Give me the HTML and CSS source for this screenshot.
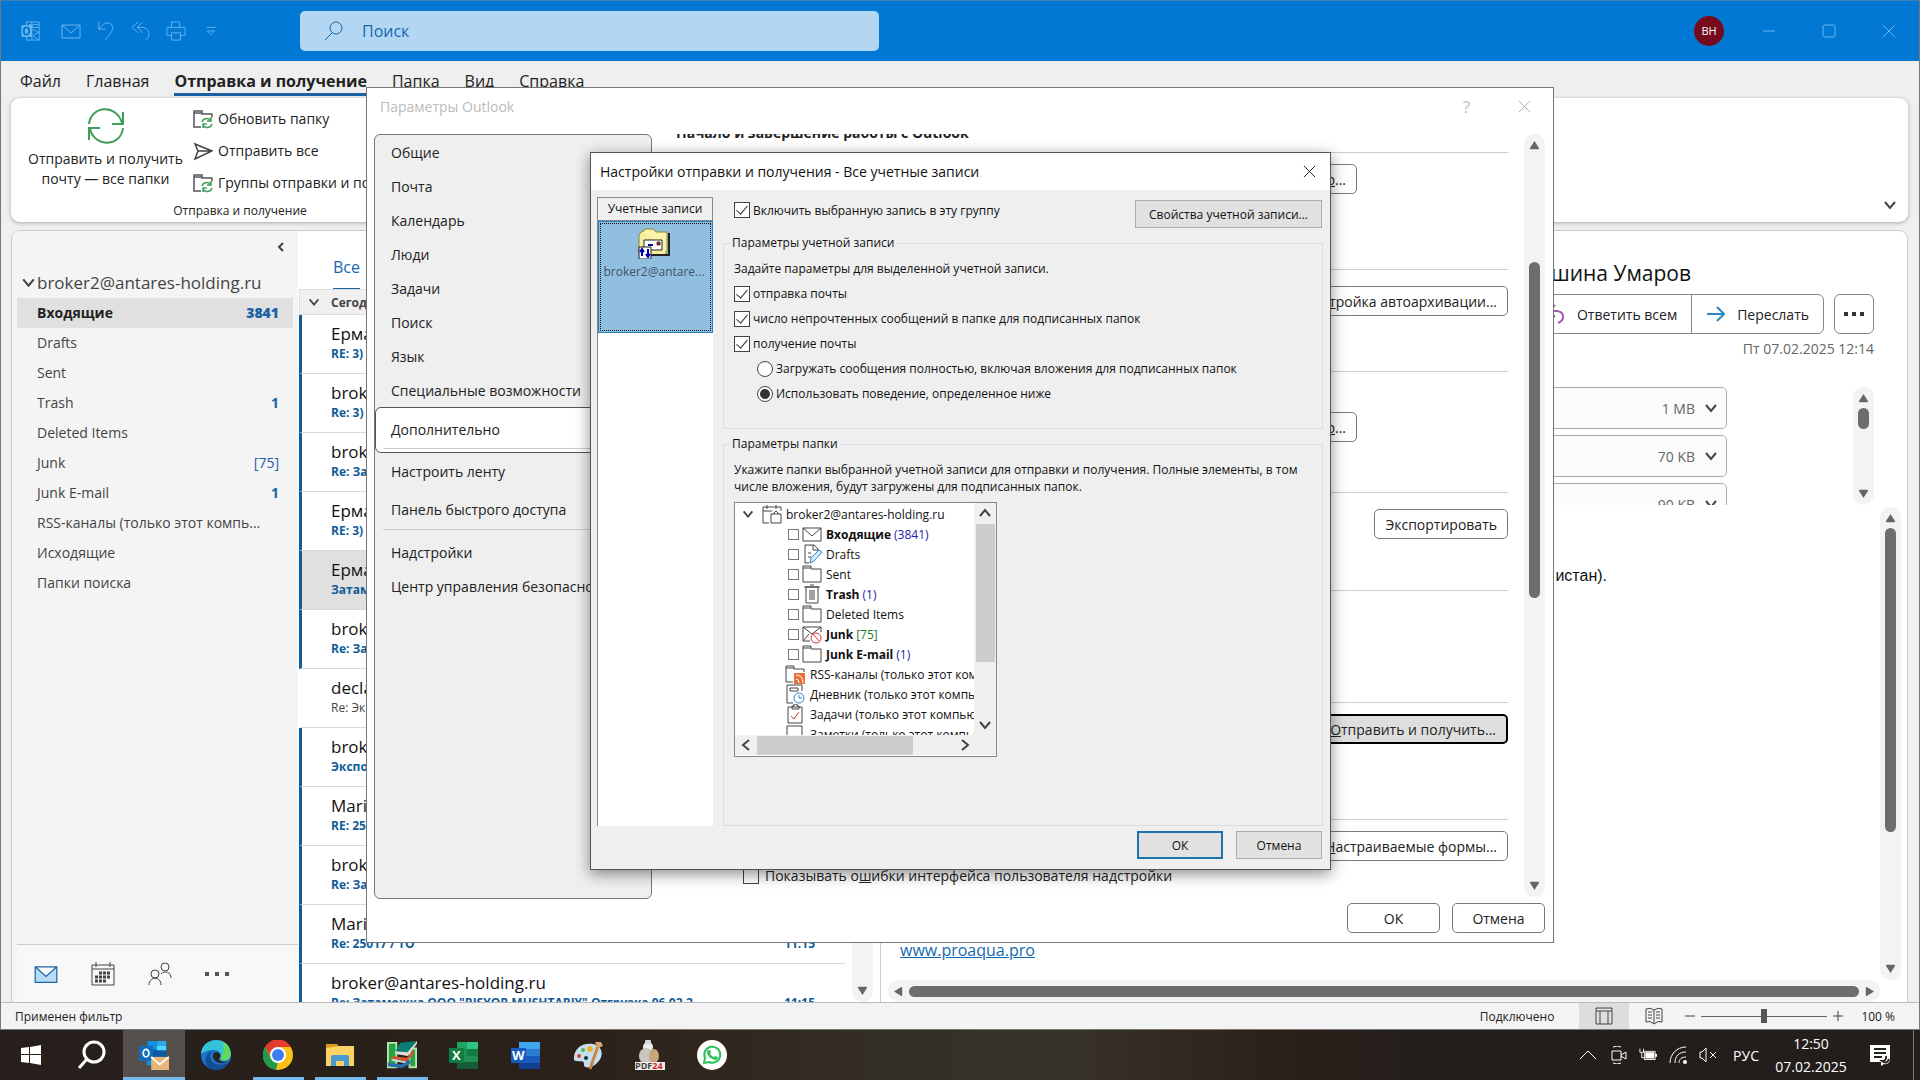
FILE: index.html
```html
<!DOCTYPE html>
<html lang="ru">
<head>
    <meta charset="UTF-8">
    <meta name="viewport" content="width=device-width, initial-scale=1.0">
    <title>Outlook</title>
    <link rel="stylesheet" href="styles.css">
</head>
<body>
    <svg class="sprite" aria-hidden="true">
        <symbol id="i-mail" viewBox="0 0 20 20"><path d="M1 4h18v13H1zM1 4l9 8 9-8"/></symbol>
        <symbol id="i-chev" viewBox="0 0 16 16"><path d="M3 5l5 6 5-6"/></symbol>
        <symbol id="i-close" viewBox="0 0 14 14"><path d="M1 1l12 12M13 1L1 13"/></symbol>
        <symbol id="i-folder" viewBox="0 0 20 20"><path d="M1 18V2h8v3h10v13zM1 4h8"/></symbol>
        <symbol id="i-sync" viewBox="0 0 20 20"><path fill="none" stroke="#555" stroke-width="1.5" d="M8 18H1V2h8v3h10v3M1 4h8"/><path fill="none" stroke="#3f9e58" stroke-width="1.5" d="M9 13c1-4 7-5 9-1M18 8v4h-4M19 15c-1 4-7 5-9 1M10 19v-4h4"/></symbol>
        <symbol id="i-up" viewBox="0 0 12 12"><path fill="#666" d="M6 1l5 8q0 1-1 1H2q-1 0-1-1z"/></symbol>
    </svg>

    <div class="outlook">
        <header class="titlebar">
            <nav class="quick">
                <button aria-label="Outlook"><svg viewBox="0 0 22 22"><path d="M6 5V1h14v20H6v-4M9 4h11M12 1v6h8M20 12l-7 4 7 5M13 9l7 4M12 17v4"/><path fill="#6ab6ee" d="M1 5h11v12H1z"/><ellipse cx="6" cy="11" rx="3" ry="4" fill="#6ab6ee" stroke="#0078d4" stroke-width="2"/></svg></button>
                <button aria-label="Создать"><svg><use href="#i-mail"/></svg></button>
                <button aria-label="Отменить"><svg viewBox="0 0 20 22"><path d="M2 1v8h8M2 9C6 3 12 0 16 4c4 5-1 9-7 17"/></svg></button>
                <button aria-label="Ответить всем"><svg viewBox="0 0 22 22"><path d="M8 1L1 7l7 6M13 1L7 7l6 6M7 7h6c8 1 9 10 3 14"/></svg></button>
                <button aria-label="Печать"><svg viewBox="0 0 22 22"><path d="M6 7V1h9v6M6 16H1V7h20v9h-5M6 13h10v8H6z"/></svg></button>
                <button aria-label="Настройка панели"><svg viewBox="0 0 22 22"><path d="M6 7h10M7 11l4 4 4-4z"/></svg></button>
            </nav>
            <label class="search">
                <svg viewBox="0 0 20 20"><circle cx="12" cy="7" r="6"/><path d="M8 12l-7 7"/></svg>
                <input type="text" placeholder="Поиск" aria-label="Поиск">
            </label>
            <div class="win-ctrl">
                <span class="avatar">ВН</span>
                <button aria-label="Свернуть"><svg viewBox="0 0 14 14"><path d="M1 7h12"/></svg></button>
                <button aria-label="Развернуть"><svg viewBox="0 0 14 14"><rect x="1" y="1" width="12" height="12" rx="2"/></svg></button>
                <button aria-label="Закрыть"><svg><use href="#i-close"/></svg></button>
            </div>
        </header>

        <nav class="tabs">
            <a href="#">Файл</a>
            <a href="#">Главная</a>
            <a href="#" class="active">Отправка и получение</a>
            <a href="#">Папка</a>
            <a href="#">Вид</a>
            <a href="#">Справка</a>
        </nav>

        <section class="ribbon">
            <div class="ribbon-group">
                <div class="ribbon-tools">
                    <button class="big">
                        <svg viewBox="0 0 38 38"><path d="M2 17C4-2 30-3 35 16M36 5v12H25M36 21C34 40 8 41 3 22M2 33V21h11"/></svg>
                        <span>Отправить и получить почту — все папки</span>
                    </button>
                    <div class="small-tools">
                        <button><svg><use href="#i-sync"/></svg>Обновить папку</button>
                        <button><svg viewBox="0 0 20 20"><path stroke-width="1.5" d="M2 3l17 7-17 8 3-8zM5 10h13"/></svg>Отправить все</button>
                        <button><svg><use href="#i-sync"/></svg>Группы отправки и получения</button>
                    </div>
                </div>
                <span class="group-name">Отправка и получение</span>
            </div>
            <button class="collapse" aria-label="Свернуть ленту"><svg><use href="#i-chev"/></svg></button>
        </section>

        <main class="workspace">
            <aside class="folders">
                <button class="fold" aria-label="Свернуть область"><svg viewBox="0 0 8 12"><path d="M6 2L2 6l4 4"/></svg></button>
                <h2><svg><use href="#i-chev"/></svg>broker2@antares-holding.ru</h2>
                <ul>
                    <li class="current"><a href="#">Входящие</a><b>3841</b></li>
                    <li><a href="#">Drafts</a></li>
                    <li><a href="#">Sent</a></li>
                    <li><a href="#">Trash</a><b>1</b></li>
                    <li><a href="#">Deleted Items</a></li>
                    <li><a href="#">Junk</a><i>[75]</i></li>
                    <li><a href="#">Junk E-mail</a><b>1</b></li>
                    <li><a href="#">RSS-каналы (только этот компь...</a></li>
                    <li><a href="#">Исходящие</a></li>
                    <li><a href="#">Папки поиска</a></li>
                </ul>
                <nav class="modules">
                    <button aria-label="Почта" class="mail-on"><svg><use href="#i-mail"/></svg></button>
                    <button aria-label="Календарь"><svg viewBox="0 0 24 24"><path d="M1 3h22v20H1zM1 7h22M5 0v5M19 0v5"/><path stroke-width="3" stroke-dasharray="3 1" d="M8 11h12M4 15h16M4 19h11"/></svg></button>
                    <button aria-label="Люди"><svg viewBox="0 0 24 24"><circle cx="7" cy="12" r="4"/><circle cx="17" cy="5" r="4"/><path d="M1 23c0-9 12-9 12 0M13 12c4-4 10-2 10 4"/></svg></button>
                    <button aria-label="Ещё"><svg viewBox="0 0 24 24"><path stroke="none" fill="#555" d="M0 10h4v4H0zM10 10h4v4h-4zM20 10h4v4h-4z"/></svg></button>
                </nav>
            </aside>

            <section class="messages">
                <div class="filter"><a href="#">Все</a></div>
                <div class="group"><svg><use href="#i-chev"/></svg>Сегодня</div>
                <ul>
                    <li><span>Ерма</span><b>RE: 3)</b></li>
                    <li><span>broker</span><b>Re: 3)</b></li>
                    <li><span>broker</span><b>Re: За</b></li>
                    <li><span>Ерма</span><b>RE: 3)</b></li>
                    <li class="picked"><span>Ерма</span><b>Затам</b></li>
                    <li><span>broker</span><b>Re: За</b></li>
                    <li class="read"><span>decla</span><b>Re: Эк</b></li>
                    <li><span>broker</span><b>Экспо</b></li>
                    <li><span>Mari</span><b>RE: 25</b></li>
                    <li><span>broker</span><b>Re: За</b></li>
                    <li><span>Mari</span><b>Re: 25017 / ТО<time>11:15</time></b></li>
                    <li><span>broker@antares-holding.ru</span><b>Re: Затаможка ООО "RISYOR MUSHTARIY" Отгрузка 06.02.2<time>11:15</time></b></li>
                </ul>
                <div class="vbar list-bar"><svg class="down"><use href="#i-up"/></svg></div>
            </section>

            <article class="reading">
                <h1>шина Умаров</h1>
                <div class="actions">
                    <button><svg class="purple" viewBox="0 0 20 20"><path d="M9 1L3 7l6 6M4 7h7c8 1 8 9 1 12"/></svg>Ответить всем</button>
                    <button><svg class="blue" viewBox="0 0 20 20"><path d="M1 10h17M11 3l7 7-7 7"/></svg>Переслать</button>
                    <button class="more" aria-label="Другие действия"><svg viewBox="0 0 20 20"><path d="M0 8h4v4H0zM8 8h4v4H8zM16 8h4v4h-4z"/></svg></button>
                </div>
                <time class="date">Пт 07.02.2025 12:14</time>
                <div class="attachments">
                    <ul>
                        <li>1 MB<svg><use href="#i-chev"/></svg></li>
                        <li>70 KB<svg><use href="#i-chev"/></svg></li>
                        <li>90 KB<svg><use href="#i-chev"/></svg></li>
                    </ul>
                    <div class="vbar"><svg><use href="#i-up"/></svg><i></i><svg class="down"><use href="#i-up"/></svg></div>
                </div>
                <div class="mail">
                    <div class="mail-body">
                        <p>истан).</p>
                        <a href="#">www.proaqua.pro</a>
                    </div>
                    <div class="vbar"><svg><use href="#i-up"/></svg><i></i><svg class="down"><use href="#i-up"/></svg></div>
                </div>
                <div class="hbar"><svg class="left"><use href="#i-up"/></svg><i></i><svg class="right"><use href="#i-up"/></svg></div>
            </article>
        </main>

        <footer class="status">
            <span>Применен фильтр</span>
            <span class="online">Подключено</span>
            <button class="view on" aria-label="Обычный"><svg viewBox="0 0 18 18"><path d="M1 1h16v16H1zM1 4h16M5 4v13M13 4v13"/></svg></button>
            <button class="view" aria-label="Чтение"><svg viewBox="0 0 18 18"><path d="M9 3Q5 0 1 2v13q4-2 8 2 4-4 8-2V2Q13 0 9 3v14M3 5h4M3 8h4M3 11h4M11 5h4M11 8h4M11 11h4"/></svg></button>
            <button class="step" aria-label="Уменьшить"><svg viewBox="0 0 12 12"><path d="M1 6h10"/></svg></button>
            <input type="range" min="0" max="100" value="50" aria-label="Масштаб">
            <button class="step" aria-label="Увеличить"><svg viewBox="0 0 12 12"><path d="M1 6h10M6 1v10"/></svg></button>
            <span class="zoom">100 %</span>
        </footer>
    </div>

    <footer class="taskbar">
        <nav class="apps">
            <button aria-label="Пуск"><svg viewBox="0 0 30 30"><path fill="#fff" d="M5 8l8-1v7H5zM14 7l11-2v9H14zM5 15h8v8l-8-1zM14 15h11v10l-11-2z"/></svg></button>
            <button aria-label="Поиск"><svg viewBox="0 0 30 30"><circle cx="17" cy="12" r="10" fill="none" stroke="#fff" stroke-width="3"/><path stroke="#fff" stroke-width="3" d="M10 19L2 28"/></svg></button>
            <button class="front" aria-label="Outlook"><svg viewBox="0 0 32 32"><path fill="#0a5aa8" d="M9 1h20v18H9z"/><path fill="#1490df" d="M9 1h10v9H9zM8 22h10v5H8z"/><path fill="#28a8ea" d="M19 1h10v5H19z"/><path fill="#50d9ff" d="M19 6h10v5H19z"/><rect y="6" width="15" height="16" rx="1" fill="#0f6cbd"/><ellipse cx="7.500" cy="14" rx="3" ry="4" fill="none" stroke="#fff" stroke-width="2"/><path fill="#e8b777" d="M13 18h19v14H13z"/><path d="M13 18l9 8 10-8" fill="none" stroke="#fff" stroke-width="2"/></svg></button>
            <button aria-label="Edge"><svg viewBox="0 0 30 30"><circle cx="15" cy="15" r="15" fill="#1b72c8"/><path fill="#35c1d6" d="M0 14C1-4 29-5 30 14c0 7-7 8-11 5 3-4-1-10-7-9-6 0-11 3-12 4z"/><path fill="#64d85c" d="M22 2c8 4 10 15 4 18-3 1-6 0-7-1 3-3 4-8 3-17z"/><path fill="#124c93" d="M9 15c0 9 8 12 18 8-5 8-18 10-22 1-2-7 3-13 7-13-2 1-3 2-3 4z"/><path fill="#28221d" d="M13 13c3-2 7 0 6 3l-1 4c3 3 7 2 10 1-6 4-15 2-16-4 0-2 0-3 1-4z"/></svg></button>
            <button class="open" aria-label="Chrome"><svg viewBox="0 0 30 30"><circle cx="15" cy="15" r="15" fill="#fbc116"/><path fill="#e33b2e" d="M2 7a15 15 0 0 1 26 0H15L9 18z"/><path fill="#229a4a" d="M2 7l7 12 6 3-2 8A15 15 0 0 1 2 7z"/><circle cx="15" cy="15" r="8" fill="#fff"/><circle cx="15" cy="15" r="6" fill="#3b7ded"/></svg></button>
            <button class="open" aria-label="Проводник"><svg viewBox="0 0 30 30"><path fill="#d89b1c" d="M1 4h11l3 4H1z"/><path fill="#fbd364" d="M1 8l13-2h15v20H1z"/><path fill="#4a9ad4" d="M6 26v-9q0-2 2-2h14q2 0 2 2v9h-5v-5h-8v5z"/></svg></button>
            <button class="open" aria-label="Справочник"><svg viewBox="0 0 32 32"><path fill="#25a341" stroke="#b6e6b0" d="M1 3h9v26H1zM24 9h7v20h-7z"/><path fill="#0a7d74" d="M14 3L32 1 22 13 9 12z"/><path fill="#ddd" d="M9 12l13 1L32 1v3L22 17 9 15z"/><path fill="#d4562b" d="M5 17l16 2 8-9v4l-8 9L5 20z"/><path fill="#c9d6dd" d="M5 20l16 3v2L5 22z"/><path fill="#2a6da8" d="M1 24l14 2 10-5v4l-9 5-15-2z"/></svg></button>
            <button aria-label="Excel"><svg viewBox="0 0 30 30"><path fill="#1f8f53" d="M8 2h21v27H8z"/><path fill="#33c481" d="M18 2h11v7H18z"/><path fill="#21a366" d="M8 2h10v7H8z"/><path fill="#185c37" d="M8 22h21v7H8z"/><path fill="#107c41" d="M0 8h15v15H0zM18 9h11v7H18z"/><text x="3" y="20">X</text></svg></button>
            <button aria-label="Word"><svg viewBox="0 0 30 30"><path fill="#2b7cd3" d="M8 2h21v27H8z"/><path fill="#41a5ee" d="M8 2h21v7H8z"/><path fill="#185abd" d="M8 16h21v7H8zM0 8h15v15H0z"/><path fill="#103f91" d="M8 23h21v6H8z"/><text x="1" y="20">W</text></svg></button>
            <button aria-label="Paint"><svg viewBox="0 0 30 30"><path fill="#c5dff0" d="M1 20C0 9 9 2 20 4c10 2 11 12 5 18-6 7-15 7-14 2 0-5-6-1-10-4z"/><circle cx="6" cy="16" r="2" fill="#d2433a"/><circle cx="10" cy="10" r="2" fill="#56b14b"/><circle cx="17" cy="9" r="3" fill="#ecb42e"/><circle cx="13" cy="18" r="2" fill="#22303c"/><path stroke="#c98646" stroke-width="3" d="M17 29L25 6"/><path fill="#d9aa76" d="M22 2l6 0 2 4-5 2z"/></svg></button>
            <button aria-label="PDF24"><svg viewBox="0 0 30 30"><circle cx="13" cy="7" r="5" fill="#eee"/><circle cx="13" cy="2" r="3" fill="#ddd"/><ellipse cx="11" cy="16" rx="7" ry="8" fill="#c9c6c0"/><ellipse cx="19" cy="16" rx="5" ry="7" fill="#c8a67a"/><path fill="#eee" d="M0 22h30v8H0z"/><text class="pdf" x="0" y="29">PDF<tspan>24</tspan></text></svg></button>
            <button aria-label="WhatsApp"><svg viewBox="0 0 30 30"><circle cx="15" cy="15" r="15" fill="#fff"/><path fill="none" stroke="#2fc25c" stroke-width="2" d="M7 23l1-5a8 8 0 1 1 4 4z"/><path fill="#2fc25c" d="M11 10l2 0 1 3-1 1q1 2 4 3l1-1 3 1q0 3-3 3-7-2-8-7 0-2 1-3z"/></svg></button>
        </nav>
        <div class="tray">
            <svg viewBox="0 0 18 18"><path d="M1 13l8-8 8 8"/></svg>
            <svg viewBox="0 0 18 18"><path d="M3 5h9v9H3zM12 9l5-3v7l-5-3M4 1q4-2 8 0M4 17q4 2 8 0"/></svg>
            <svg viewBox="0 0 20 18"><path d="M1 2v4h4V2M3 6v6h3M6 5h12v9H6z"/><path fill="#fff" stroke="none" d="M7 6h10v7H7zM18 8h2v3h-2z"/></svg>
            <svg viewBox="0 0 18 18"><path d="M1 17C1 8 8 1 17 1M6 17c0-7 4-11 11-11M10 17c0-4 3-6 7-6"/><circle cx="16" cy="16" r="2" fill="#fff" stroke="none"/></svg>
            <svg viewBox="0 0 18 18"><path d="M1 6h2l4-4v14l-4-4H1zM11 6l6 6M17 6l-6 6"/></svg>
            <span class="lang">РУС</span>
            <span class="clock">12:50<br>07.02.2025</span>
            <svg class="notes" viewBox="0 0 22 22"><path fill="#fff" stroke="none" d="M1 1h20v13q0 7-6 6l-3 2v-4H1z"/><path stroke="#28221d" d="M5 5h12M5 9h12M5 13h8M17 12q1 5-4 5 5 4 7-2"/></svg>
        </div>
    </footer>

    <section class="options" role="dialog" aria-label="Параметры Outlook">
        <header>
            <span>Параметры Outlook</span>
            <button aria-label="Справка">?</button>
            <button aria-label="Закрыть"><svg><use href="#i-close"/></svg></button>
        </header>
        <div class="options-main">
            <nav>
                <a href="#">Общие</a>
                <a href="#">Почта</a>
                <a href="#">Календарь</a>
                <a href="#">Люди</a>
                <a href="#">Задачи</a>
                <a href="#">Поиск</a>
                <a href="#">Язык</a>
                <a href="#">Специальные возможности</a>
                <a href="#" class="selected">Дополнительно</a>
                <a href="#" class="tall">Настроить ленту</a>
                <a href="#" class="tall">Панель быстрого доступа</a>
                <hr>
                <a href="#">Надстройки</a>
                <a href="#">Центр управления безопасностью</a>
            </nav>
            <div class="options-page">
                <h3>Начало и завершение работы с Outlook</h3>
                <div class="sections">
                    <div class="short"><button>Обзо<u>р</u>...</button></div>
                    <div><button>Нас<u>т</u>ройка автоархивации...</button></div>
                    <div class="short low"><button>Обзо<u>р</u>...</button></div>
                    <div><button>Экспортировать</button></div>
                    <div></div>
                    <div><button class="pressed"><u>О</u>тправить и получить...</button></div>
                    <div><button><u>Н</u>астраиваемые формы...</button>
                        <label><input type="checkbox"><span>Показывать о<u>ш</u>ибки интерфейса пользователя надстройки</span></label>
                    </div>
                </div>
            </div>
            <div class="vbar"><svg><use href="#i-up"/></svg><i></i><svg class="down"><use href="#i-up"/></svg></div>
        </div>
        <footer>
            <button>ОК</button>
            <button>Отмена</button>
        </footer>
    </section>

    <section class="settings" role="dialog" aria-label="Настройки отправки и получения">
        <header>
            <span>Настройки отправки и получения - Все учетные записи</span>
            <button aria-label="Закрыть"><svg><use href="#i-close"/></svg></button>
        </header>
        <div class="settings-main">
            <aside>
                <div class="col-head">Учетные записи</div>
                <button class="account">
                    <svg viewBox="0 0 32 32"><path fill="#f4ee9c" stroke="#8a8430" d="M1 28V8l3-4h9l3 4h12v20z"/><path fill="#f9f4a8" stroke="#8a8430" d="M5 5l2-3h8l3 3h11v20"/><path stroke="#222" stroke-width="2" fill="none" d="M31 6v22H12"/><path fill="#fff" stroke="#222" d="M6 13h18v10H6z"/><path stroke="#00a" stroke-width="2" d="M10 18h5"/><path fill="#c00" d="M19 15h3v3h-3z"/><path fill="#fff" stroke="#222" d="M1 20h12v12H1z"/><path fill="none" stroke="#00a" stroke-width="2" d="M4 29v-6M2 25l2-3 2 3M10 22v7M8 27l2 3 2-3"/></svg>
                    broker2@antare...
                </button>
            </aside>
            <div class="form">
                <div class="form-top">
                    <label><input type="checkbox" checked>Включить выбранную запись в эту группу</label>
                    <button>Свойства учетной записи...</button>
                </div>
                <fieldset>
                    <legend>Параметры учетной записи</legend>
                    <p>Задайте параметры для выделенной учетной записи.</p>
                    <label><input type="checkbox" checked>отправка почты</label>
                    <label><input type="checkbox" checked>число непрочтенных сообщений в папке для подписанных папок</label>
                    <label><input type="checkbox" checked>получение почты</label>
                    <label class="sub"><input type="radio" name="mode">Загружать сообщения полностью, включая вложения для подписанных папок</label>
                    <label class="sub"><input type="radio" name="mode" checked>Использовать поведение, определенное ниже</label>
                </fieldset>
                <fieldset class="grow">
                    <legend>Параметры папки</legend>
                    <p class="hint">Укажите папки выбранной учетной записи для отправки и получения. Полные элементы, в том числе вложения, будут загружены для подписанных папок.</p>
                    <div class="tree">
                        <div class="tree-view">
                            <ul>
                                <li class="root"><svg class="twist"><use href="#i-chev"/></svg><svg viewBox="0 0 20 20"><path d="M7 19H1V3h18v4M1 7h9M5 1v4M14 1v4M9 19v-9h10v9zM11 10l3-3 3 3"/></svg>broker2@antares-holding.ru</li>
                                <li><label><input type="checkbox"><svg><use href="#i-mail"/></svg><b>Входящие</b> <em>(3841)</em></label></li>
                                <li><label><input type="checkbox"><svg viewBox="0 0 20 20"><path d="M7 19H3V1h9l4 4v3M11 1v5h5M6 9h3M6 13h3"/><path fill="#d3ecfb" stroke="#2b87c8" d="M8 19l1-5 8-8 3 2-8 9z"/></svg>Drafts</label></li>
                                <li><label><input type="checkbox"><svg><use href="#i-folder"/></svg>Sent</label></li>
                                <li><label><input type="checkbox"><svg viewBox="0 0 20 20"><path d="M4 3h12v16H4zM2 3h16M8 1h4M8 6v10M10 6v10M12 6v10"/></svg><b>Trash</b> <em>(1)</em></label></li>
                                <li><label><input type="checkbox"><svg><use href="#i-folder"/></svg>Deleted Items</label></li>
                                <li><label><input type="checkbox"><svg viewBox="0 0 20 20"><path d="M8 17H1V3h18v5M1 3l9 7 9-7M1 17l6-7"/><g stroke="#d63a3f"><circle cx="14" cy="14" r="5" fill="#fff"/><path d="M11 10l7 8"/></g></svg><b>Junk</b> <em class="green">[75]</em></label></li>
                                <li><label><input type="checkbox"><svg><use href="#i-folder"/></svg><b>Junk E-mail</b> <em>(1)</em></label></li>
                                <li class="local"><svg viewBox="0 0 20 20"><path d="M8 18H1V2h8v3h10v3M1 4h8"/><path fill="#e8703a" stroke="none" d="M9 9h11v11H9z"/><path stroke="#fff" d="M11 11q7 0 7 8M11 15q3 0 3 4"/></svg>RSS-каналы (только этот компьютер)</li>
                                <li class="local"><svg viewBox="0 0 20 20"><path d="M8 19H2V1h15v6M5 4h8v3H5z"/><g stroke="#2b87c8"><circle cx="14" cy="14" r="5" fill="#fff"/><path d="M14 11v3h3"/></g></svg>Дневник (только этот компьютер)</li>
                                <li class="local"><svg viewBox="0 0 20 20"><path d="M3 3h14v16H3zM7 5V2h2V0h3v2h2v3z"/><path stroke="#d63a3f" d="M6 12l3 3 5-7"/></svg>Задачи (только этот компьютер)</li>
                                <li class="local"><svg viewBox="0 0 20 20"><path d="M2 2h15v16H2z"/></svg>Заметки (только этот компьютер)</li>
                            </ul>
                            <div class="flat-v"><svg class="flip"><use href="#i-chev"/></svg><i></i><svg><use href="#i-chev"/></svg></div>
                        </div>
                        <div class="flat-h"><svg class="to-left"><use href="#i-chev"/></svg><i></i><svg class="to-right"><use href="#i-chev"/></svg></div>
                    </div>
                </fieldset>
            </div>
        </div>
        <footer>
            <button class="default">ОК</button>
            <button>Отмена</button>
        </footer>
    </section>
</body>
</html>
```

FILE: styles.css
```css
* {
    box-sizing: border-box;
}
body {
    margin: 0;
    height: 100vh;
    display: flex;
    flex-direction: column;
    overflow: hidden;
    position: relative;
    font-family: "Open Sans", "Noto Sans", sans-serif;
    font-size: 14px;
    color: #222;
    background: #efefef;
}
button, input {
    font: inherit;
    color: inherit;
}
button {
    background: none;
    border: none;
    padding: 0;
}
a {
    color: inherit;
    text-decoration: none;
}
ul {
    list-style: none;
    margin: 0;
    padding: 0;
}
h1, h2, h3, p {
    margin: 0;
    font-weight: normal;
}
svg {
    fill: none;
    stroke: #444;
    stroke-width: 2;
    flex: none;
}
.sprite {
    position: absolute;
    width: 0;
    height: 0;
}
#i-up path {
    stroke: none;
}

/* main window */
.outlook {
    flex: 1;
    min-height: 0;
    display: flex;
    flex-direction: column;
    border: 1px solid #777;
    border-top-color: #3b82b8;
}
.titlebar {
    height: 60px;
    flex: none;
    display: flex;
    align-items: center;
    background: #0078d4;
}
.quick {
    width: 299px;
    display: flex;
    gap: 15px;
    padding-left: 20px;
}
.quick button:first-child {
    margin-right: 5px;
}
.quick svg {
    width: 20px;
    height: 20px;
    display: block;
    stroke: #6ab6ee;
    stroke-width: 1;
}
.search {
    width: 579px;
    height: 40px;
    display: flex;
    align-items: center;
    gap: 16px;
    padding-left: 24px;
    background: #b3d7f2;
    border-radius: 5px;
}
.search svg {
    width: 20px;
    height: 20px;
    stroke: #1269b0;
    stroke-width: 1;
}
.search input {
    flex: 1;
    border: none;
    background: none;
    outline: none;
    font-size: 16px;
}
.search input::placeholder {
    color: #1269b0;
}
.win-ctrl {
    margin-left: auto;
    display: flex;
    align-items: center;
    gap: 46px;
    padding-right: 23px;
}
.win-ctrl svg {
    width: 14px;
    height: 14px;
    display: block;
    stroke: #6ab6ee;
    stroke-width: 1;
}
.avatar {
    width: 30px;
    height: 30px;
    margin-right: -8px;
    border-radius: 50%;
    background: #750b1c;
    color: #fff;
    font-size: 11px;
    line-height: 30px;
    text-align: center;
}
.tabs {
    display: flex;
    gap: 25px;
    flex: none;
    height: 37px;
    padding: 7px 19px 0;
    font-size: 16px;
    line-height: 26px;
}
.tabs .active {
    height: 28px;
    font-weight: bold;
    border-bottom: 3px solid #1b62a5;
}
.ribbon {
    flex: none;
    height: 124px;
    margin: 0 11px 8px 10px;
    display: flex;
    justify-content: space-between;
    background: #fff;
    border-radius: 9px;
    box-shadow: 0 1px 4px rgba(0, 0, 0, 0.3);
}
.ribbon-group {
    width: 458px;
    display: flex;
    flex-direction: column;
    align-items: center;
}
.ribbon-tools {
    width: 100%;
    height: 104px;
    display: flex;
    gap: 9px;
    padding: 5px 0 0 16px;
}
.big {
    width: 157px;
    line-height: 20px;
    display: flex;
    flex-direction: column;
    align-items: center;
    gap: 4px;
    padding-top: 4px;
}
.big svg {
    width: 38px;
    height: 38px;
    stroke: #3f9e58;
}
.small-tools button {
    display: flex;
    align-items: center;
    gap: 5px;
    height: 32px;
    line-height: 32px;
    white-space: nowrap;
}
.small-tools svg {
    width: 20px;
    height: 20px;
}
.group-name {
    font-size: 12px;
}
.collapse {
    align-self: flex-end;
    padding: 9px 10px;
}
.collapse svg {
    width: 16px;
    height: 16px;
    display: block;
}

/* workspace */
.workspace {
    flex: 1;
    min-height: 0;
    margin: 0 11px 0 10px;
    display: flex;
    background: #fff;
    border: 1px solid #ccc;
    border-bottom: none;
    border-radius: 9px 9px 0 0;
    overflow: hidden;
}
.folders {
    width: 286px;
    flex: none;
    display: flex;
    flex-direction: column;
    padding-left: 5px;
    background: #f4f4f4;
    color: #444;
}
.fold {
    align-self: flex-end;
    height: 32px;
    margin-right: 13px;
}
.fold svg {
    width: 8px;
    height: 12px;
    display: block;
}
.folders h2 {
    display: flex;
    align-items: center;
    margin-top: 3px;
    height: 32px;
    padding-left: 3px;
    font-size: 17px;
}
.folders h2 svg {
    width: 17px;
    height: 17px;
}
.folders li {
    height: 30px;
    line-height: 30px;
    display: flex;
    justify-content: space-between;
    margin-right: 5px;
    padding: 0 14px 0 20px;
}
.folders .current {
    background: #e0e0e0;
    color: #222;
    font-weight: bold;
}
.folders b, .folders i {
    color: #1b62a5;
    font-style: normal;
}
.modules {
    margin-top: auto;
    height: 58px;
    display: flex;
    align-items: center;
    gap: 33px;
    padding-left: 17px;
    background: #f9f8f8;
    border-top: 1px solid #ccc;
}
.modules svg {
    width: 24px;
    height: 26px;
    display: block;
    stroke-width: 1;
}
.mail-on svg {
    fill: #b7dcf5;
    stroke: #1b62a5;
}
.messages {
    width: 583px;
    flex: none;
    display: grid;
    grid-template: 58px 26px minmax(0, 1fr) / 1fr 35px;
    padding-left: 1px;
    overflow: hidden;
    border-right: 1px solid #ccc;
}
.filter {
    grid-row: 1;
    grid-column: 1;
    padding-left: 34px;
    display: flex;
    font-size: 16px;
    color: #1269b0;
}
.filter a {
    padding-top: 25px;
    border-bottom: 1px solid #1b62a5;
}
.group {
    grid-row: 2;
    grid-column: 1;
    display: flex;
    align-items: center;
    gap: 10px;
    padding-left: 7px;
    background: #f0f0f0;
    border: 1px solid #ddd;
    font-size: 12px;
    font-weight: bold;
    color: #444;
}
.group svg {
    width: 14px;
    height: 14px;
}
.messages ul {
    grid-column: 1;
    grid-row: 3;
    overflow: hidden;
}
.messages li {
    height: 59px;
    padding: 7px 30px 0 29px;
    display: flex;
    flex-direction: column;
    border-left: 3px solid #0f5c99;
    border-bottom: 1px solid #d8d8d8;
    white-space: nowrap;
}
.messages li span {
    font-size: 17px;
    line-height: 24px;
    color: #111;
}
.messages li b {
    display: flex;
    justify-content: space-between;
    font-size: 12px;
    line-height: 16px;
    color: #0f5c99;
}
.messages .picked {
    background: #e0e0e0;
}
.messages .read {
    border-left-color: #fff;
}
.messages .read b {
    font-weight: normal;
    color: #444;
}

/* rounded scrollbars */
.vbar {
    width: 21px;
    flex: none;
    display: flex;
    flex-direction: column;
    align-items: center;
    padding: 6px 0;
    background: #f3f3f3;
    border-radius: 10px;
}
.vbar svg, .hbar svg {
    width: 13px;
    height: 11px;
}
.vbar i {
    width: 11px;
    background: #6d6d6d;
    border-radius: 6px;
}
.down {
    transform: rotate(180deg);
    margin-top: auto;
}
.list-bar {
    grid-column: 2;
    grid-row: 1 / 4;
    justify-self: start;
    margin-left: 7px;
}
.hbar {
    height: 22px;
    display: flex;
    align-items: center;
    gap: 4px;
    margin: 0 27px 0 7px;
    padding: 0 4px;
    background: #f3f3f3;
    border-radius: 10px;
}
.hbar i {
    flex: 1;
    height: 11px;
    background: #6d6d6d;
    border-radius: 6px;
}
.left {
    transform: rotate(-90deg);
}
.right {
    transform: rotate(90deg);
}

/* reading pane */
.reading {
    flex: 1;
    min-width: 0;
    display: flex;
    flex-direction: column;
    text-align: right;
}
.reading h1 {
    padding: 26px 216px 0 0;
    font-size: 21px;
    line-height: 32px;
    color: #111;
}
.actions {
    display: flex;
    justify-content: flex-end;
    padding: 5px 33px 0 0;
}
.actions button {
    height: 40px;
    display: flex;
    align-items: center;
    gap: 11px;
    padding: 0 14px;
    border: 1px solid #888;
}
.actions button:nth-child(2) {
    margin: 0 10px 0 -1px;
    border-radius: 0 6px 6px 0;
}
.actions svg {
    width: 20px;
    height: 20px;
}
.purple {
    stroke: #a35cb0;
}
.blue {
    stroke: #2b87c8;
}
.actions .more {
    width: 40px;
    padding: 0 9px;
    border-radius: 6px;
}
.more svg {
    fill: #333;
    stroke: none;
}
.date {
    padding: 3px 33px 0 0;
    line-height: 24px;
    color: #666;
}
.attachments {
    height: 118px;
    display: flex;
    justify-content: flex-end;
    gap: 126px;
    margin: 26px 33px 2px 0;
    overflow: hidden;
}
.attachments ul {
    width: 300px;
}
.attachments li {
    height: 42px;
    margin-bottom: 6px;
    display: flex;
    align-items: center;
    justify-content: flex-end;
    gap: 8px;
    padding-right: 7px;
    border: 1px solid #aaa;
    border-radius: 5px;
    background: #fbfbfb;
    color: #666;
}
.attachments svg {
    width: 16px;
    height: 16px;
}
.attachments .vbar svg {
    width: 13px;
    height: 11px;
}
.attachments .vbar i {
    height: 21px;
    margin-top: 4px;
}
.mail {
    flex: 1;
    min-height: 0;
    display: flex;
    justify-content: space-between;
    padding-right: 6px;
}
.mail-body {
    flex: 1;
    display: flex;
    flex-direction: column;
    justify-content: space-between;
    padding: 58px 273px 18px 19px;
}
.mail-body p {
    font-family: "Liberation Sans", Arial, sans-serif;
    font-size: 16px;
    line-height: 22px;
    color: #111;
}
.mail-body a {
    align-self: flex-start;
    font-size: 16px;
    line-height: 24px;
    color: #1269b0;
    text-decoration: underline;
}
.mail .vbar i {
    height: 66%;
    margin-top: 4px;
}

/* status bar */
.status {
    height: 27px;
    flex: none;
    display: flex;
    align-items: center;
    padding: 0 24px 0 14px;
    background: #f3f3f3;
    border-top: 1px solid #bbb;
    font-size: 12px;
}
.online {
    margin-left: auto;
    margin-right: 25px;
}
.view {
    width: 50px;
    height: 26px;
    display: flex;
    align-items: center;
    justify-content: center;
}
.view.on {
    background: #ddd;
}
.view svg {
    width: 18px;
    height: 18px;
    stroke-width: 1;
}
.step {
    padding: 0 5px;
}
.step svg {
    width: 12px;
    height: 12px;
    display: block;
    stroke-width: 1;
}
.status input {
    appearance: none;
    width: 126px;
    height: 16px;
    margin: 0;
    background: linear-gradient(#666, #666) center / 100% 1px no-repeat;
}
.status input::-webkit-slider-thumb {
    appearance: none;
    width: 6px;
    height: 14px;
    background: #555;
}
.zoom {
    margin-left: 12px;
}

/* taskbar */
.taskbar {
    height: 50px;
    flex: none;
    display: flex;
    justify-content: space-between;
    background: linear-gradient(90deg, #261f1b 0, #2b211a 30%, #353025 48%, #38332a 55%, #2b201a 67%, #231e1b 75%);
    color: #fff;
}
.apps {
    display: flex;
}
.apps button {
    width: 62px;
    display: flex;
    align-items: center;
    justify-content: center;
}
.apps button:first-child {
    width: 61px;
}
.apps svg {
    width: 30px;
    height: 30px;
    stroke: none;
}
.apps text {
    fill: #fff;
    font-size: 13px;
    font-weight: bold;
}
.apps .pdf {
    fill: #444;
    font-size: 9px;
}
.apps tspan {
    fill: #d22;
}
.front {
    background: #55504c;
    box-shadow: inset 0 -3px #76b9ed;
}
.apps .open {
    background: linear-gradient(#76b9ed, #76b9ed) bottom / 51px 3px no-repeat;
}
.tray {
    display: flex;
    align-items: center;
    gap: 12px;
    padding-right: 6px;
}
.tray::after {
    content: "";
    align-self: stretch;
    border-left: 1px solid #777;
    margin-left: 10px;
}
.tray svg {
    width: 18px;
    height: 18px;
    stroke: #fff;
    stroke-width: 1;
}
.lang {
    padding: 0 4px;
}
.clock {
    width: 72px;
    line-height: 23px;
    text-align: center;
}
.tray .notes {
    width: 22px;
    height: 22px;
    margin-left: 10px;
    stroke-width: 2;
}

/* Outlook options window */
.options {
    position: absolute;
    left: 366px;
    top: 87px;
    width: 1188px;
    height: 856px;
    display: flex;
    flex-direction: column;
    background: #fff;
    border: 1px solid #777;
}
.options header {
    height: 46px;
    display: flex;
    align-items: center;
    gap: 48px;
    padding: 0 22px 9px 13px;
    color: #bbb;
}
.options header span {
    margin-right: auto;
}
.options header button {
    font-size: 17px;
}
.options header svg, .settings header svg {
    width: 13px;
    height: 13px;
    display: block;
    stroke: #aaa;
    stroke-width: 1;
}
.options-main {
    height: 765px;
    display: flex;
    padding: 0 8px 0 7px;
}
.options-main nav {
    width: 278px;
    padding-top: 1px;
    background: #efefef;
    border: 1px solid #777;
    border-radius: 6px;
}
.options-main nav a {
    display: block;
    padding-left: 16px;
    line-height: 34px;
    white-space: nowrap;
    overflow: hidden;
}
.options-main nav .selected {
    height: 46px;
    margin-top: -1px;
    padding-left: 15px;
    line-height: 44px;
    background: linear-gradient(#ccc, #ccc) 8px 40px / 100% 1px no-repeat #fff;
    border: 1px solid #555;
    border-radius: 6px;
}
.options-main nav .tall {
    line-height: 38px;
}
.options-main hr {
    margin: 0 8px 6px;
    border: none;
    border-top: 1px solid #ccc;
}
.options-page {
    flex: 1;
    padding: 0 16px 0 24px;
    overflow: hidden;
}
.options-page h3 {
    margin-top: -13px;
    height: 31px;
    font-size: 14px;
    font-weight: bold;
    line-height: 24px;
}
.sections {
    display: grid;
    grid-template-rows: 117px 102px 121px 98px 112px 117px 90px;
}
.sections div {
    display: flex;
    flex-direction: column;
    align-items: flex-end;
    padding-top: 11px;
    border-top: 1px solid #ccc;
}
.sections .short {
    padding-right: 151px;
}
.sections .low {
    padding-top: 40px;
}
.sections div:nth-child(2), .sections div:nth-child(4) {
    padding-top: 16px;
}
.sections button, .options footer button {
    height: 30px;
    padding: 0 10px;
    background: #fff;
    border: 1px solid #777;
    border-radius: 5px;
}
.sections .pressed {
    background: #dedede;
    border: 2px solid #000;
}
.sections label {
    align-self: flex-start;
    margin: 5px 0 0 67px;
    display: flex;
    align-items: center;
    gap: 6px;
}
.sections input, .settings input {
    appearance: none;
    width: 16px;
    height: 16px;
    margin: 0;
    flex: none;
    display: grid;
    place-items: center;
    background: #fff;
    border: 1px solid #444;
}
.options-main .vbar {
    height: 763px;
}
.options-main .vbar i {
    height: 336px;
    margin-top: 111px;
}
.options footer {
    display: flex;
    justify-content: flex-end;
    gap: 12px;
    padding: 0 8px;
    margin-top: 4px;
}
.options footer button {
    width: 93px;
}

/* send/receive settings window */
.settings {
    position: absolute;
    left: 590px;
    top: 152px;
    width: 741px;
    height: 718px;
    display: flex;
    flex-direction: column;
    background: #efefef;
    border: 1px solid #555;
    box-shadow: 0 4px 14px rgba(0, 0, 0, 0.45);
    color: #111;
    font-size: 12px;
}
.settings header {
    height: 37px;
    flex: none;
    display: flex;
    align-items: center;
    justify-content: space-between;
    padding: 0 14px 0 9px;
    background: #fff;
    font-size: 14px;
}
.settings header svg {
    stroke: #111;
}
.settings-main {
    flex: 1;
    min-height: 0;
    display: flex;
    gap: 10px;
    padding: 7px 7px 0 6px;
}
.settings aside {
    width: 116px;
    background: #fff;
    border-left: 1px solid #888;
}
.col-head {
    height: 24px;
    line-height: 22px;
    text-align: center;
    background: #f0f0f0;
    border: 1px solid #888;
    border-left: none;
}
.account {
    width: 100%;
    height: 112px;
    display: flex;
    flex-direction: column;
    align-items: center;
    justify-content: flex-start;
    gap: 4px;
    padding: 5px 3px 0 0;
    background: #91bfe0;
    border: 1px solid #2b7dbb;
    outline: 1px dotted #111;
    outline-offset: -3px;
    color: #3f5568;
}
.account svg {
    width: 32px;
    height: 32px;
    stroke-width: 1;
}
.form {
    flex: 1;
    display: flex;
    flex-direction: column;
}
.form-top {
    display: flex;
    align-items: flex-start;
    justify-content: space-between;
    height: 37px;
    padding: 3px 1px 0 11px;
}
.settings label {
    display: flex;
    align-items: center;
    gap: 3px;
    height: 25px;
}
.settings .form-top label {
    height: 20px;
}
.form-top button, .settings > footer button {
    height: 28px;
    padding: 0 13px;
    background: #e1e1e1;
    border: 1px solid #adadad;
}
.settings fieldset {
    min-width: 0;
    margin: 0;
    height: 195px;
    border: 1px solid #dcdcdc;
    padding: 8px 10px 0;
}
.settings .grow {
    height: auto;
    flex: 1;
    margin-top: 6px;
}
.settings legend {
    margin-left: -4px;
    padding: 0 2px;
    line-height: 18px;
}
.settings p {
    line-height: 18px;
    margin-bottom: 3px;
}
.settings .hint {
    line-height: 17px;
    margin-bottom: 7px;
}
.settings .sub {
    padding-left: 23px;
}
.settings input:checked::after {
    content: "";
    width: 5px;
    height: 10px;
    margin-top: -3px;
    border: solid #333;
    border-width: 0 1px 1px 0;
    transform: rotate(40deg);
}
.settings input[type="radio"] {
    border-radius: 50%;
}
.settings input[type="radio"]:checked::after {
    width: 10px;
    height: 10px;
    margin: 0;
    border: none;
    border-radius: 50%;
    background: #333;
}
.tree {
    width: 263px;
    height: 255px;
    background: #fff;
    border: 1px solid #828790;
}
.tree-view {
    height: 232px;
    display: flex;
    overflow: hidden;
}
.tree ul {
    flex: 1;
    overflow: hidden;
    padding-top: 1px;
}
.tree li {
    height: 20px;
    padding-left: 53px;
    display: flex;
    align-items: center;
    white-space: nowrap;
}
.settings .tree label {
    height: 20px;
}
.tree input {
    width: 11px;
    height: 11px;
    border-color: #777;
}
.tree svg {
    width: 20px;
    height: 20px;
    stroke-width: 1;
    margin-right: 1px;
}
.tree .root {
    padding-left: 6px;
    gap: 3px;
}
.tree .twist {
    width: 14px;
    height: 14px;
    margin-right: 4px;
    stroke-width: 2;
}
.tree .local {
    padding-left: 50px;
    gap: 4px;
}
.tree em {
    font-style: normal;
    color: #2222b0;
}
.tree .green {
    color: #1c7a1c;
}
.flat-v, .flat-h {
    display: flex;
    align-items: center;
    justify-content: space-between;
    background: #f0f0f0;
}
.flat-v {
    width: 22px;
    flex-direction: column;
}
.flat-v svg, .flat-h svg {
    width: 16px;
    height: 20px;
    margin: 0;
    stroke-width: 2;
}
.flat-v i {
    width: 19px;
    height: 138px;
    margin: 1px 0 auto;
    background: #cdcdcd;
}
.flat-h {
    height: 20px;
    padding: 0 23px 0 3px;
}
.flat-h i {
    width: 156px;
    height: 19px;
    margin: 0 auto 0 3px;
    background: #cdcdcd;
}
.flip {
    transform: rotate(180deg);
}
.to-left {
    transform: rotate(90deg);
}
.to-right {
    transform: rotate(-90deg);
}
.settings > footer {
    display: flex;
    justify-content: flex-end;
    gap: 13px;
    padding: 5px 8px 10px;
}
.settings > footer button {
    width: 86px;
}
.settings > footer .default {
    border: 2px solid #1b74ad;
}
```
